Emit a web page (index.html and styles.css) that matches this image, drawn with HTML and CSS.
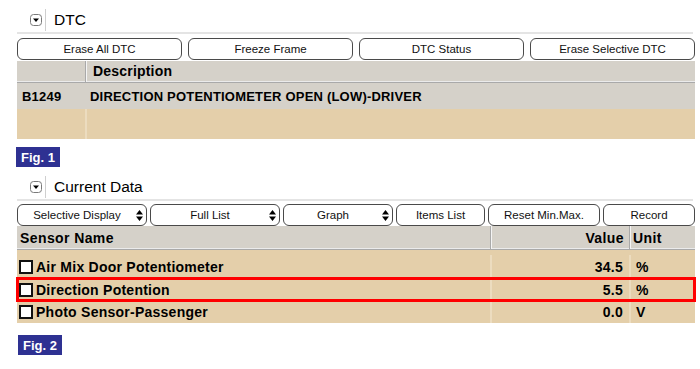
FILE: index.html
```html
<!DOCTYPE html>
<html>
<head>
<meta charset="utf-8">
<link rel="stylesheet" href="styles.css">
</head>
<body>
<div class="page">
  <div class="title">
    <svg class="toggle" width="12" height="12" viewBox="0 0 12 12"><rect x="0.5" y="0.5" width="11" height="11" rx="3" fill="#fff" stroke="#7a7a7a"/><path d="M3 4.5 H9 L6 8 Z" fill="#000"/></svg>
    <span class="vsep"></span>
    <span class="title-text">DTC</span>
  </div>
  <div class="btnbar bar4">
    <div class="btn">Erase All DTC</div>
    <div class="btn">Freeze Frame</div>
    <div class="btn">DTC Status</div>
    <div class="btn">Erase Selective DTC</div>
  </div>
  <div class="dtc">
    <div class="drow head">
      <div class="c"></div>
      <div class="c div">Description</div>
    </div>
    <div class="drow gray">
      <div class="c">B1249</div>
      <div class="c divl">DIRECTION POTENTIOMETER OPEN (LOW)-DRIVER</div>
    </div>
    <div class="drow tan empty">
      <div class="c"></div>
      <div class="c divt"></div>
    </div>
  </div>
  <div class="fig fig1">Fig. 1</div>

  <div class="title title2">
    <svg class="toggle" width="12" height="12" viewBox="0 0 12 12"><rect x="0.5" y="0.5" width="11" height="11" rx="3" fill="#fff" stroke="#7a7a7a"/><path d="M3 4.5 H9 L6 8 Z" fill="#000"/></svg>
    <span class="vsep"></span>
    <span class="title-text">Current Data</span>
  </div>
  <div class="btnbar bar6">
    <div class="btn sel w-sel">Selective Display<svg class="updown" width="7" height="11" viewBox="0 0 7 11"><path d="M3.5 0 L7 4.5 H0 Z M3.5 11 L7 6.5 H0 Z" fill="#000"/></svg></div>
    <div class="btn sel w-full">Full List<svg class="updown" width="7" height="11" viewBox="0 0 7 11"><path d="M3.5 0 L7 4.5 H0 Z M3.5 11 L7 6.5 H0 Z" fill="#000"/></svg></div>
    <div class="btn sel w-graph">Graph<svg class="updown" width="7" height="11" viewBox="0 0 7 11"><path d="M3.5 0 L7 4.5 H0 Z M3.5 11 L7 6.5 H0 Z" fill="#000"/></svg></div>
    <div class="btn w-items">Items List</div>
    <div class="btn w-reset">Reset Min.Max.</div>
    <div class="btn w-rec">Record</div>
  </div>
  <div class="data">
    <div class="srow head">
      <div class="c">Sensor Name</div>
      <div class="c div num">Value</div>
      <div class="c div">Unit</div>
    </div>
    <div class="srow tan first">
      <div class="c"><span class="cb"></span>Air Mix Door Potentiometer</div>
      <div class="c divt num">34.5</div>
      <div class="c divt">%</div>
    </div>
    <div class="srow tan hl">
      <div class="c"><span class="cb"></span>Direction Potention</div>
      <div class="c divt num">5.5</div>
      <div class="c divt">%</div>
    </div>
    <div class="srow tan last">
      <div class="c"><span class="cb"></span>Photo Sensor-Passenger</div>
      <div class="c divt num">0.0</div>
      <div class="c divt">V</div>
    </div>
  </div>
  <div class="fig fig2">Fig. 2</div>
</div>
</body>
</html>
```
FILE: styles.css
```css
* { box-sizing: border-box; }
body {
  margin: 0;
  background: #fff;
  font-family: "Liberation Sans", Arial, sans-serif;
  color: #000;
}
.page {
  width: 695px;
  padding: 8px 0 0 17px;
}
.title {
  display: flex;
  align-items: center;
  height: 26px;
  border-bottom: 2px solid #e4e4e4;
  width: 676px;
  padding-left: 13px;
}
.toggle { display: block; flex: none; }
.vsep {
  width: 1px;
  height: 22px;
  background: #cfcfcf;
  margin: 0 8px 0 3px;
}
.title-text {
  font-size: 15.5px;
  line-height: 18px;
}
.btnbar {
  display: flex;
  margin-top: 4px;
  height: 23px;
}
.bar4 { gap: 6px; }
.bar4 .btn { width: 165px; }
.bar6 { gap: 3px; margin-top: 3px; height: 22px; }
.btn {
  height: 22px;
  border: 1px solid #4a4a4a;
  border-radius: 6px;
  background: #fff;
  font-size: 11.5px;
  display: flex;
  align-items: center;
  justify-content: center;
  position: relative;
  color: #111;
}
.btn.sel { padding-right: 10px; }
.updown {
  position: absolute;
  right: 3px;
  top: 5px;
}
.w-sel { width: 130px; }
.w-full { width: 130px; }
.w-graph { width: 110px; }
.w-items { width: 89px; }
.w-reset { width: 112px; }
.w-rec { width: 92px; }

.dtc, .data { width: 678px; }
.c {
  font-weight: bold;
  font-size: 13px;
  letter-spacing: 0.2px;
  display: flex;
  align-items: center;
  padding-left: 5px;
  white-space: nowrap;
}
.drow {
  display: grid;
  grid-template-columns: 68px 610px;
}
.drow.head {
  height: 22px;
  background: #d5d1c9;
  border-bottom: 1px solid #a9a9a9;
  box-shadow: inset 0 -1px 0 #ebebeb;
}
.drow.head .c { font-size: 14px; padding-left: 7px; padding-bottom: 2px; }
.div { border-left: 1px solid #a9a9a9; box-shadow: inset 1px 0 0 #f4f4f4; }
.drow.gray {
  height: 26px;
  background: #d5d1c9;
}
.drow.empty { height: 30px; }
.tan { background: #e4cfaa; }
.divt { border-left: 2px solid #ecdcbf; }

.fig {
  display: inline-flex;
  align-items: center;
  justify-content: center;
  background: #2e3192;
  color: #fff;
  font-weight: bold;
  font-size: 13px;
  height: 20px;
  width: 44px;
  margin-left: -1px;
}
.fig1 { margin-top: 8px; }

.title2 { margin-top: 8px; }

.srow {
  display: grid;
  grid-template-columns: 473px 139px 66px;
}
.srow.head {
  height: 24px;
  background: #d5d1c9;
  border-bottom: 1px solid #a9a9a9;
  box-shadow: inset 0 -1px 0 #ebebeb;
}
.srow.head .c { font-size: 14px; letter-spacing: 0.4px; padding-left: 3px; }
.srow.head .num { padding-right: 5px; }
.srow .c { font-size: 14px; letter-spacing: 0.25px; }
.srow .num { justify-content: flex-end; padding-right: 6px; }
.srow.tan { height: 22px; }
.srow.tan .c:first-child { padding-left: 2px; }
.srow.tan .c:last-child { padding-left: 5px; }
.srow.first { height: 28px; padding-top: 5px; }
.srow.hl {
  height: 23px;
  outline: 3px solid #ff0000;
  outline-offset: -2px;
  position: relative;
}
.cb {
  width: 14px;
  height: 14px;
  border: 2px solid #111;
  background: #fff;
  margin-right: 3px;
  flex: none;
}
.fig2 { margin-top: 12px; margin-left: 1px; }
```
